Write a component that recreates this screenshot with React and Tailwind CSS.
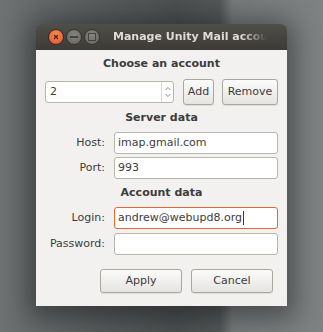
import { useState } from "react"

const font = "font-['DejaVu_Sans',sans-serif]"

function Field({ label, value, focused, cursor }) {
  return (
    <div className="flex items-center">
      <div className="w-[69px] pr-[9px] text-right text-[11px] text-[#3c3c3c]">{label}</div>
      <div
        className={
          "flex h-[22px] flex-1 items-center rounded-[3px] bg-white pl-[3px] text-[11px] text-[#3c3c3c] " +
          (focused ? "border border-[#e5692e]" : "border border-[#b8b5af]")
        }
      >
        {value}
        {cursor && <span className="ml-[1px] inline-block h-[14px] w-px bg-[#3c3c3c]" />}
      </div>
    </div>
  )
}

function Btn({ children, className }) {
  return (
    <div
      className={
        "flex items-center justify-center rounded-[3px] border border-[#aaa7a1] bg-gradient-to-b from-[#fbfbfa] to-[#e6e4e1] text-[11px] text-[#3c3c3c] shadow-[0_1px_0_rgba(0,0,0,0.08)] " +
        className
      }
    >
      {children}
    </div>
  )
}

export default function App() {
  const [cuenta] = useState("2")

  return (
    <div
      className={
        "h-[332px] w-[323px] overflow-hidden pl-[36px] pt-[24px] bg-[linear-gradient(90deg,#6e7272_0%,#585c5c_30%,#4c5050_55%,#535757_68%,#767a7a_72%,#7e8282_100%)] " +
        font
      }
    >
      <div className="w-[251px] rounded-t-[6px] shadow-[0_4px_26px_8px_rgba(0,0,0,0.38)]">
        {/* Barra de título */}
        <div className="flex h-[26px] items-center rounded-t-[6px] bg-gradient-to-b from-[#4f4e49] to-[#3c3b37] pl-[12px] pr-[20px]">
          <div className="flex items-center gap-[2px]">
            <div className="flex h-[16px] w-[16px] items-center justify-center rounded-full border border-[#3a2a22] bg-[radial-gradient(circle_at_50%_35%,#f68a5c,#e0561f)]">
              <svg width="6" height="6" viewBox="0 0 6 6">
                <path d="M1 1L5 5M5 1L1 5" stroke="#4a1e0a" strokeWidth="1.1" />
              </svg>
            </div>
            <div className="flex h-[16px] w-[16px] items-center justify-center rounded-full border border-[#35342f] bg-[radial-gradient(circle_at_50%_35%,#86847e,#64625c)]">
              <div className="h-[2px] w-[8px] bg-[#45443f]" />
            </div>
            <div className="flex h-[16px] w-[16px] items-center justify-center rounded-full border border-[#35342f] bg-[radial-gradient(circle_at_50%_35%,#86847e,#64625c)]">
              <div className="h-[8px] w-[8px] border-[1.5px] border-[#45443f]" />
            </div>
          </div>
          <div className="ml-[13px] flex-1 overflow-hidden whitespace-nowrap text-[11px] font-bold text-[#dfdbd2] [mask-image:linear-gradient(90deg,#000_84%,transparent)]">
            Manage Unity Mail accounts
          </div>
        </div>

        {/* Cuerpo */}
        <div className="bg-[#f2f1f0] px-[9px] pb-[13px] pt-[7px]">
          <div className="text-center text-[11px] font-bold leading-[14px] text-[#3c3c3c]">Choose an account</div>

          <div className="mt-[8px] flex h-[26px] items-center">
            <div className="flex h-[22px] w-[129px] items-stretch rounded-[3px] border border-[#b8b5af] bg-white">
              <div className="flex flex-1 items-center pl-[4px] text-[11px] text-[#3c3c3c]">{cuenta}</div>
              <div className="flex w-[12px] flex-col items-center justify-center border-l border-[#dcdad5]">
                <svg width="8" height="16" viewBox="0 0 8 16">
                  <path d="M1.5 6L4 3.5L6.5 6M1.5 10L4 12.5L6.5 10" fill="none" stroke="#8c8a86" strokeWidth="1" />
                </svg>
              </div>
            </div>
            <Btn className="ml-[9px] h-[26px] w-[31px]">Add</Btn>
            <Btn className="ml-[8px] h-[26px] w-[56px]">Remove</Btn>
          </div>

          <div className="mt-[6px] text-center text-[11px] font-bold leading-[14px] text-[#3c3c3c]">Server data</div>
          <div className="mt-[7px] flex flex-col gap-[3px]">
            <Field label="Host:" value="imap.gmail.com" />
            <Field label="Port:" value="993" />
          </div>

          <div className="mt-[7px] text-center text-[11px] font-bold leading-[14px] text-[#3c3c3c]">Account data</div>
          <div className="mt-[7px] flex flex-col gap-[4px]">
            <Field label="Login:" value="andrew@webupd8.org" focused cursor />
            <Field label="Password:" value="" />
          </div>

          <div className="mt-[14px] flex justify-end gap-[9px] pr-[5px]">
            <Btn className="h-[24px] w-[82px]">Apply</Btn>
            <Btn className="h-[24px] w-[82px]">Cancel</Btn>
          </div>
        </div>
      </div>
    </div>
  )
}
